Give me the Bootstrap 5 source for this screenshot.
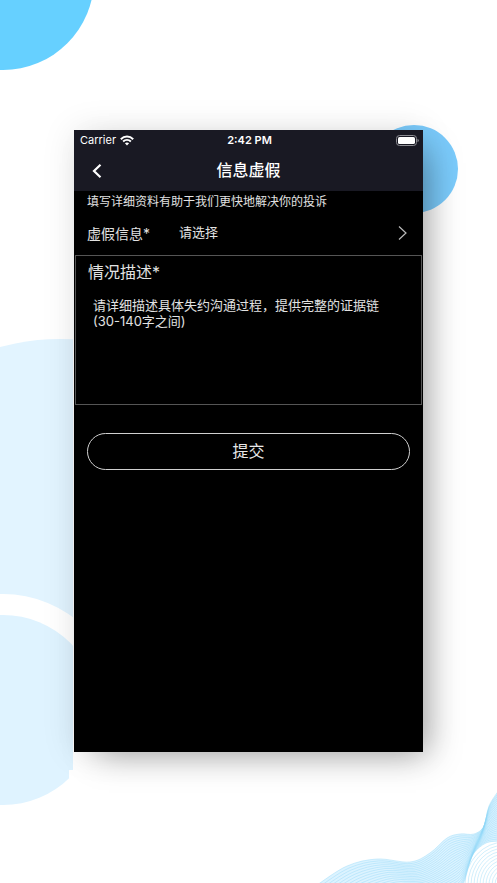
<!DOCTYPE html>
<html lang="zh-CN">
<head>
<meta charset="utf-8">
<meta name="viewport" content="width=device-width, initial-scale=1">
<title>信息虚假</title>
<link href="https://cdn.jsdelivr.net/npm/bootstrap@5.3.0/dist/css/bootstrap.min.css" rel="stylesheet">
<style>
body { font-family: Inter, "Noto Sans CJK SC", sans-serif; background: #fff; }
.stage { padding: 130px 74px 131px; isolation: isolate; }
.backdrop { position: absolute; inset: 0; width: 100%; height: 100%; z-index: -1; }
.corner-wave { position: absolute; right: 0; bottom: 0; width: 180px; height: 93px; z-index: -1; }
.phone { background: #000; color: #e2e2e2; box-shadow: 14px 12px 32px -10px rgba(0,0,0,.34), 0 0 32px rgba(0,0,0,.1); }
.topbar { background: #191923; color: #fff; }
.status { height: 20px; padding: 0 4px 0 6px; font-size: 11px; line-height: 20px; }
.titlebar { height: 41px; padding: 0 13px 2px; }
.titlebar h1 { font-size: 16px; line-height: 24px; font-weight: 500; }
.side { flex: 1 0 0; }
.back { line-height: 0; }
.hint { font-size: 12px; line-height: 22px; padding: 0 13px; }
.kind { height: 42px; padding: 0 15px 2px 13px; font-size: 14px; }
.kind label { width: 92px; }
.kind select { appearance: none; background: transparent; color: #e2e2e2; border: 0; padding: 0; font-size: 13px; outline: 0; }
.detail { height: 150px; margin: 0 1px; border: 1px solid #555; padding: 4px 12px; }
.detail label { font-size: 16px; line-height: 24px; }
.detail textarea { background: transparent; border: 0; resize: none; outline: 0; color: #e2e2e2; font-size: 13px; line-height: 16px; padding: 13px 5px 0; }
.detail textarea::placeholder { color: #e2e2e2; opacity: 1; }
.submit { margin: 28px 13px; height: 37px; border: 1px solid #d0d0d0; font-size: 16px; line-height: 24px; color: #e8e8e8; padding: 0 0 2px; }
</style>
<script src="https://cdn.jsdelivr.net/npm/bootstrap@5.3.0/dist/js/bootstrap.bundle.min.js"></script>
</head>
<body>
<main class="stage position-relative min-vh-100 d-flex flex-column overflow-hidden">
  <svg class="backdrop" aria-hidden="true">
    <clipPath id="margin"><rect width="73" height="770"/><rect width="69" height="883"/></clipPath>
    <circle cx="3" cy="-21" r="91" fill="#66d0ff"/>
    <g clip-path="url(#margin)">
      <circle cx="60" cy="568" r="229" fill="#e2f4ff"/>
      <circle cx="3" cy="711" r="117" fill="#fff"/>
      <circle cx="3" cy="710" r="95" fill="#dff3ff"/>
    </g>
  </svg>
  <svg class="backdrop" aria-hidden="true"><circle cx="414" cy="169" r="44" fill="#7bcbfb"/></svg>
  <svg class="corner-wave" viewBox="317 790 180 93" fill="none" stroke="#8fd6f8" stroke-width=".5" stroke-opacity=".8" aria-hidden="true"><path id="fill" stroke="none" fill="#c5ebff" fill-opacity=".6"/><g id="lines"></g></svg>

  <section class="phone flex-grow-1 d-flex flex-column">
    <header class="topbar">
      <div class="status d-flex align-items-center">
        <div class="side d-flex align-items-center gap-1">
          <span>Carrier</span>
          <svg width="14" height="11" viewBox="0 0 14 11" fill="none" stroke="#fff" stroke-width="2" aria-hidden="true"><path d="M.8 4.2C4.400.7 9.600.7 13.200 4.200M3.100 6.600c2.300-2.100 5.500-2.100 7.800 0"/><path d="M4.900 8.300c1.200-1.100 3-1.100 4.200 0L7 10.500z" fill="#fff" stroke="none"/></svg>
        </div>
        <span class="fw-semibold">2:42 PM</span>
        <div class="side d-flex justify-content-end">
          <svg width="23" height="11" viewBox="0 0 23 11" aria-hidden="true"><rect x=".5" y=".5" width="20" height="10" rx="3" fill="none" stroke="#8c8c92"/><rect x="2" y="2" width="17" height="7" rx="1.6" fill="#fff"/><path d="M21.500 3.800q1.300.5 1.300 1.700t-1.300 1.700z" fill="#8c8c92"/></svg>
        </div>
      </div>
      <nav class="titlebar d-flex align-items-center">
        <div class="side"><button type="button" class="back btn p-1 border-0" aria-label="返回"><svg width="11" height="14" viewBox="0 0 11 14" fill="none" stroke="#fff" stroke-width="2.200" aria-hidden="true"><path d="M9.500.8 3 7l6.500 6.200"/></svg></button></div>
        <h1 class="m-0">信息虚假</h1>
        <div class="side"></div>
      </nav>
    </header>
    <form class="d-flex flex-column">
      <p class="hint m-0">填写详细资料有助于我们更快地解决你的投诉</p>
      <div class="kind d-flex align-items-center">
        <label for="kind">虚假信息*</label>
        <select id="kind" class="flex-grow-1"><option>请选择</option></select>
        <svg width="12" height="16" viewBox="0 0 12 16" fill="none" stroke="#bbb" stroke-width="1.200" aria-hidden="true"><path d="m3 1.500 7 6.500-7 6.500"/></svg>
      </div>
      <div class="detail d-flex flex-column">
        <label for="detail">情况描述*</label>
        <textarea id="detail" class="w-100 flex-grow-1" placeholder="请详细描述具体失约沟通过程，提供完整的证据链(30-140字之间)"></textarea>
      </div>
      <button type="submit" class="submit btn rounded-pill">提交</button>
    </form>
  </section>
</main>
<script>
// Family of curves blended between the upper crest and a lower fold
const crest = [[317,885],[347,866],[377,859],[410,862],[430,853],[447,838],[460,834],[474,834],[484,826],[489,806],[499,790]];
const fold = [[375,925],[395,915],[415,905],[432,900],[446,895],[459,890],[464,882],[468,868],[474,853],[486,843],[499,841]];
const trace = p => {
  let d = `M${p[0]}`;
  for (let i = 0; i < p.length - 1; i++) {
    const a = p[i - 1] || p[i], b = p[i], c = p[i + 1], e = p[i + 2] || c;
    d += `C${b[0] + (c[0] - a[0]) / 6} ${b[1] + (c[1] - a[1]) / 6} ${c[0] - (e[0] - b[0]) / 6} ${c[1] - (e[1] - b[1]) / 6} ${c}`;
  }
  return d;
};
let out = '';
for (let k = 0; k <= 24; k++) {
  out += `<path d="${trace(crest.map((p, i) => [p[0] + (fold[i][0] - p[0]) * k / 24, p[1] + (fold[i][1] - p[1]) * k / 24]))}"/>`;
}
for (let r = 0; r < 12; r++) out += `<ellipse cx="505" cy="885" rx="${40 - r * 3}" ry="${43 - r * 3}"/>`;
document.getElementById('lines').innerHTML = out;
document.getElementById('fill').setAttribute('d', trace(crest) + 'V841' + trace(fold.slice().reverse()).replace('M', 'L') + 'L317 925Z');
</script>
</body>
</html>
